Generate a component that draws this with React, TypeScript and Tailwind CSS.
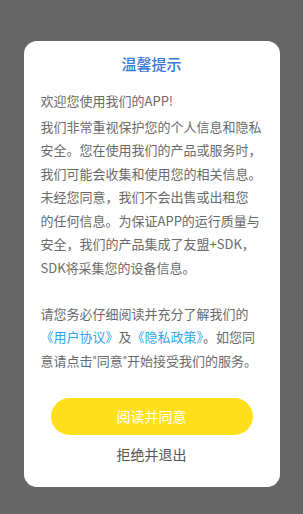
const body1 = [
  "我们非常重视保护您的个人信息和隐私",
  "安全。您在使用我们的产品或服务时，",
  "我们可能会收集和使用您的相关信息。",
  "未经您同意，我们不会出售或出租您",
  "的任何信息。为保证APP的运行质量与",
  "安全，我们的产品集成了友盟+SDK，",
  "SDK将采集您的设备信息。",
];

export default function App() {
  return (
    <div
      className="flex h-[514px] w-full items-start justify-center bg-[#666666] pt-[41px]"
      style={{ fontFamily: '"Noto Sans CJK SC", "Noto Sans", sans-serif' }}
    >
      <div className="w-[256px] rounded-[13px] bg-white px-[17px] pb-[23px] pt-[11px]">
        <h2 className="text-center text-[15px] font-medium leading-6 text-[#3a78d4]">
          温馨提示
        </h2>

        <div className="mt-[13px] text-[13px] leading-[23.5px] text-[#6a6a6a]">
          <div className="mb-[2px] whitespace-nowrap">欢迎您使用我们的APP!</div>
          {body1.map((line) => (
            <div key={line} className="whitespace-nowrap">
              {line}
            </div>
          ))}
          <div className="h-[22.5px]" />
          <div className="whitespace-nowrap">请您务必仔细阅读并充分了解我们的</div>
          <div className="whitespace-nowrap">
            <span className="text-[#2ea4ee]">《用户协议》</span>及
            <span className="text-[#2ea4ee]">《隐私政策》</span>。如您同
          </div>
          <div className="whitespace-nowrap">
            意请点击<span className="font-['Roboto']">"</span>同意<span className="font-['Roboto']">"</span>开始接受我们的服务。
          </div>
        </div>

        <button className="mx-[10px] mt-[25px] flex h-[37px] w-[202px] items-center justify-center rounded-full bg-[#ffe01a] text-[14px] text-white">
          阅读并同意
        </button>
        <div className="mt-[9px] text-center text-[14px] leading-5 text-[#555555]">
          拒绝并退出
        </div>
      </div>
    </div>
  );
}
